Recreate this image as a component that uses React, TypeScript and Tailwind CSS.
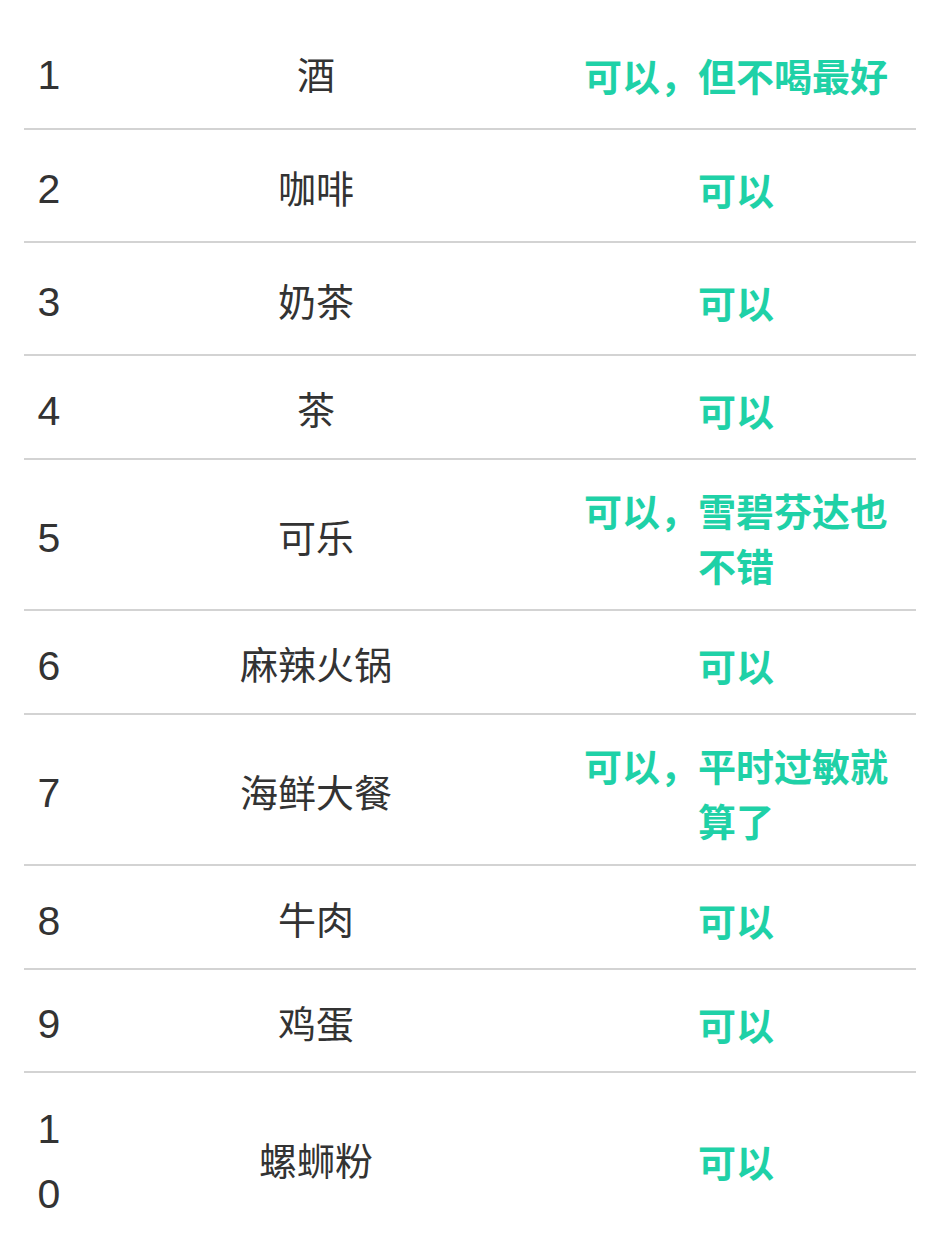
import React from "react";

type Row = { n: string; item: string; answer: string; h: string };

const rows: Row[] = [
  { n: "1", item: "酒", answer: "可以，但不喝最好", h: "h-[115px]" },
  { n: "2", item: "咖啡", answer: "可以", h: "h-[113px]" },
  { n: "3", item: "奶茶", answer: "可以", h: "h-[113px]" },
  { n: "4", item: "茶", answer: "可以", h: "h-[104px]" },
  { n: "5", item: "可乐", answer: "可以，雪碧芬达也不错", h: "h-[151px]" },
  { n: "6", item: "麻辣火锅", answer: "可以", h: "h-[104px]" },
  { n: "7", item: "海鲜大餐", answer: "可以，平时过敏就算了", h: "h-[151px]" },
  { n: "8", item: "牛肉", answer: "可以", h: "h-[104px]" },
  { n: "9", item: "鸡蛋", answer: "可以", h: "h-[103px]" },
  { n: "10", item: "螺蛳粉", answer: "可以", h: "h-[171px]" },
];

export default function App() {
  return (
    <div className="min-h-[1234px] bg-white pt-[15px] pl-[24px]">
      <div className="w-[892px]">
        {rows.map((r) => (
          <div
            key={r.n}
            className={`grid grid-cols-[52px_480px_360px] items-center border-b-2 border-[#d3d3d3] pt-[8px] ${r.h}`}
          >
            <div
              className="pl-[11px] pr-[13px] text-center break-all text-[41px] leading-[65px] text-[#333333]"
              style={{ fontFamily: '"Liberation Sans", Arial, sans-serif' }}
            >
              {r.n}
            </div>
            <div
              className="mb-[7px] text-center text-[38px] leading-[55px] text-[#333333]"
              style={{ fontFamily: '"Noto Sans CJK SC", sans-serif' }}
            >
              {r.item}
            </div>
            <div
              className="mb-[3px] px-[14px] text-center text-[38px] leading-[55px] font-bold text-[#1fd1a7]"
              style={{ fontFamily: '"Noto Sans CJK SC", sans-serif' }}
            >
              {r.answer}
            </div>
          </div>
        ))}
      </div>
    </div>
  );
}
